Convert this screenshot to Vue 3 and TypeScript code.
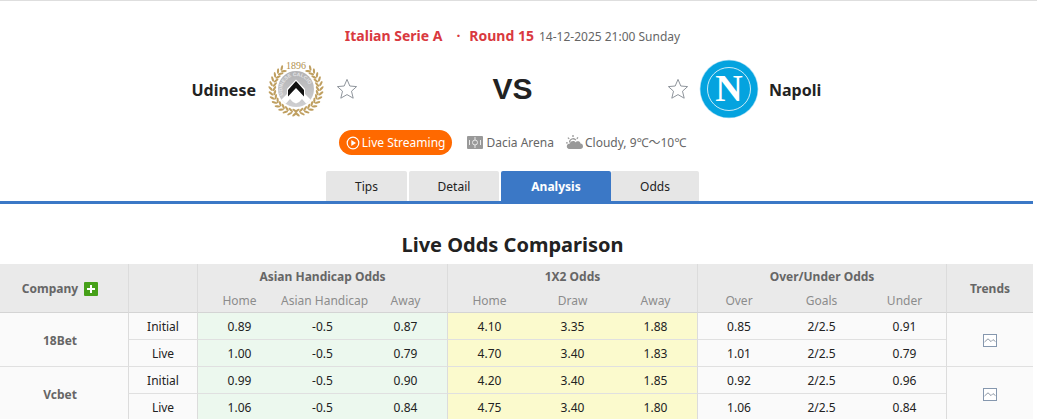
<script setup lang="ts">
interface OddsLine {
  label: string
  values: string[]
}
interface Bookmaker {
  name: string
  lines: OddsLine[]
}
interface Leaf {
  x: number
  y: number
  angle: number
}

const tabs = [
  { label: 'Tips', size: 'w-tips', active: false },
  { label: 'Detail', size: 'w-detail', active: false },
  { label: 'Analysis', size: 'w-analysis', active: true },
  { label: 'Odds', size: 'w-odds', active: false },
]

const groups = [
  { title: 'Asian Handicap Odds', columns: ['Home', 'Asian Handicap', 'Away'] },
  { title: '1X2 Odds', columns: ['Home', 'Draw', 'Away'] },
  { title: 'Over/Under Odds', columns: ['Over', 'Goals', 'Under'] },
]

const bookmakers: Bookmaker[] = [
  {
    name: '18Bet',
    lines: [
      { label: 'Initial', values: ['0.89', '-0.5', '0.87', '4.10', '3.35', '1.88', '0.85', '2/2.5', '0.91'] },
      { label: 'Live', values: ['1.00', '-0.5', '0.79', '4.70', '3.40', '1.83', '1.01', '2/2.5', '0.79'] },
    ],
  },
  {
    name: 'Vcbet',
    lines: [
      { label: 'Initial', values: ['0.99', '-0.5', '0.90', '4.20', '3.40', '1.85', '0.92', '2/2.5', '0.96'] },
      { label: 'Live', values: ['1.06', '-0.5', '0.84', '4.75', '3.40', '1.80', '1.06', '2/2.5', '0.84'] },
    ],
  },
]

const tone = (i: number) => ['asian', 'onextwo', 'total'][Math.floor(i / 3)]

// Laurel wreath: two rings of leaves on each side, leaving room for the year on top
const leaves: Leaf[] = []
for (let i = 0; i < 14; i++) {
  const deg = 34 + i * 11
  for (const side of [1, -1]) {
    for (const [radius, tilt] of [[25.4, 42], [21.6, -30]]) {
      const a = (side * deg * Math.PI) / 180
      leaves.push({
        x: 28 + radius * Math.sin(a),
        y: 28 - radius * Math.cos(a),
        angle: side * (deg + tilt) + 90,
      })
    }
  }
}
</script>

<template>
  <div class="page">
    <header class="match">
      <p class="league">
        <a href="#league">Italian Serie A</a>
        <span class="dot">·</span>
        <a href="#round">Round 15</a>
        <time>14-12-2025 21:00 Sunday</time>
      </p>

      <div class="teams">
        <div class="team home">
          <a href="#udinese">Udinese</a>
          <svg class="crest" width="56" height="56" viewBox="0 0 56 56" aria-label="Udinese crest">
            <defs>
              <linearGradient id="silver" x1="0" y1="0" x2="0" y2="1">
                <stop offset="0" stop-color="#b2b2b4" />
                <stop offset="1" stop-color="#cfcfd1" />
              </linearGradient>
              <path id="ring" d="M15.2 34 A13.8 13.8 0 1 1 40.8 34" />
              <clipPath id="disc"><circle cx="28" cy="28" r="18" /></clipPath>
            </defs>
            <ellipse
              v-for="(leaf, i) in leaves"
              :key="i"
              rx="1.1"
              ry="2.9"
              fill="#bf9f60"
              :transform="`translate(${leaf.x} ${leaf.y}) rotate(${leaf.angle})`"
            />
            <circle cx="28" cy="28" r="18.6" fill="#fff" />
            <circle cx="28" cy="28" r="18" fill="url(#silver)" />
            <text class="motto"><textPath href="#ring">UDINESE CALCIO</textPath></text>
            <g clip-path="url(#disc)">
              <path d="M28 18.5 L19 28 V33 L10 42 L14 47 L22 38 Q24 41 28 42.5 Q32 41 34 38 L42 47 L46 42 L37 33 V28 Z" fill="#fff" />
              <path d="M20 29 L28 20 L36 29 V35.5 L28 27 L20 35.5 Z" fill="#111" />
            </g>
            <text class="year" x="28" y="7.5">1896</text>
          </svg>
          <button class="star" type="button" aria-label="Follow Udinese">
            <svg width="22" height="22" viewBox="0 0 22 22">
              <path d="M11 1.4 L13.8 8 L20.6 8.6 L15.5 13.2 L17.2 20.2 L11 16.6 L4.8 20.2 L6.5 13.2 L1.4 8.6 L8.2 8 Z" />
            </svg>
          </button>
        </div>
        <strong class="versus">VS</strong>
        <div class="team away">
          <button class="star" type="button" aria-label="Follow Napoli">
            <svg width="22" height="22" viewBox="0 0 22 22">
              <path d="M11 1.4 L13.8 8 L20.6 8.6 L15.5 13.2 L17.2 20.2 L11 16.6 L4.8 20.2 L6.5 13.2 L1.4 8.6 L8.2 8 Z" />
            </svg>
          </button>
          <svg class="crest" width="60" height="60" viewBox="0 0 60 60" aria-label="Napoli crest">
            <circle cx="30" cy="30" r="29.3" fill="#a6dcf3" />
            <circle cx="30" cy="30" r="28.6" fill="#04a3df" />
            <circle cx="30" cy="30" r="21.5" fill="none" stroke="#c9ebf8" stroke-width="1" />
            <text class="letter" x="30" y="42">N</text>
          </svg>
          <a href="#napoli">Napoli</a>
        </div>
      </div>

      <div class="info">
        <button class="live" type="button">
          <svg width="14" height="14" viewBox="0 0 14 14">
            <circle cx="7" cy="7" r="5.8" fill="none" stroke="#fff" stroke-width="1.2" />
            <path d="M5.3 4 L10 7 L5.3 10 Z" fill="#fff" />
          </svg>
          Live Streaming
        </button>
        <span class="venue">
          <svg width="16" height="13" viewBox="0 0 16 13">
            <rect width="16" height="13" rx="1" fill="#999" />
            <g fill="none" stroke="#e8e8e8">
              <path d="M2.5 4 V9 M13.5 4 V9 M8 1 V4 M8 9 V12" />
              <circle cx="8" cy="6.5" r="2.5" />
            </g>
          </svg>
          Dacia Arena
        </span>
        <span class="weather">
          <svg width="17" height="16" viewBox="0 0 17 16">
            <g fill="none" stroke="#999" stroke-width="1.3">
              <path d="M3.6 7.5 A3.5 3.5 0 0 1 9.9 5.2 M0 7.8 H1.8 M1.9 2.6 L3.2 3.9 M7 0 V2 M12 2.4 L10.8 3.7" />
            </g>
            <path
              d="M4.4 14 C1.8 14 0.8 12.8 0.8 11.4 C0.8 9.6 2.2 8.4 3.9 8.4 C4.6 5.8 8.3 5.3 9.6 7.5 C10 5.9 14.2 5.5 14.5 8.5 C16 8.7 17 9.7 17 11.2 C17 12.9 15.8 14 14.2 14 Z"
              fill="#999"
            />
          </svg>
          Cloudy, 9℃～10℃
        </span>
      </div>

      <nav class="tabs">
        <a v-for="tab in tabs" :key="tab.label" href="#tab" :class="[tab.size, { active: tab.active }]">{{ tab.label }}</a>
      </nav>
    </header>

    <h1>Live Odds Comparison</h1>

    <table>
      <colgroup>
        <col class="c-company" />
        <col class="c-kind" />
        <template v-for="(g, n) in groups" :key="g.title">
          <col :class="n < 2 ? 'c-first' : 'c-odd'" />
          <col class="c-odd" />
          <col class="c-odd" />
        </template>
        <col class="c-trend" />
      </colgroup>
      <thead>
        <tr>
          <th rowspan="2" class="end">
            <span class="company">
              Company
              <button class="add" type="button" aria-label="Add company">
                <svg width="14" height="14" viewBox="0 0 14 14">
                  <path d="M7 3 V11 M3 7 H11" stroke="#fff" stroke-width="2" />
                </svg>
              </button>
            </span>
          </th>
          <th rowspan="2" class="end line"></th>
          <th v-for="g in groups" :key="g.title" colspan="3" class="line">{{ g.title }}</th>
          <th rowspan="2" class="end line">Trends</th>
        </tr>
        <tr>
          <template v-for="g in groups" :key="g.title">
            <th v-for="(c, i) in g.columns" :key="c" class="sub end" :class="{ line: i === 0 }">{{ c }}</th>
          </template>
        </tr>
      </thead>
      <tbody v-for="b in bookmakers" :key="b.name">
        <tr v-for="(l, n) in b.lines" :key="l.label">
          <th v-if="n === 0" rowspan="2" class="name">{{ b.name }}</th>
          <td class="line">{{ l.label }}</td>
          <td v-for="(v, i) in l.values" :key="i" :class="[tone(i), { line: i % 3 === 0 }]">{{ v }}</td>
          <td v-if="n === 0" rowspan="2" class="line">
            <button class="trend" type="button" aria-label="Odds trend">
              <svg width="14" height="14" viewBox="0 0 14 14">
                <rect x="0.5" y="0.5" width="13" height="12" fill="#fff" stroke="#8597ae" />
                <path d="M1.5 8 L5 4.8 L8 7.6 L10 5.6 L12.5 7.6" fill="none" stroke="#8e98a5" />
              </svg>
            </button>
          </td>
        </tr>
      </tbody>
    </table>
  </div>
</template>

<style>
body {
  margin: 0;
  background: #fff;
}
html {
  overflow: hidden;
}
</style>

<style scoped>
.page {
  padding-right: 4px;
  border-top: 1px solid #dedede;
  font-family: Tahoma, "Noto Sans", "Noto Sans CJK SC", sans-serif;
  font-size: 12px;
  line-height: 16px;
  color: #222;
}
a {
  color: inherit;
  text-decoration: none;
}
button {
  padding: 0;
  border: 0;
  background: none;
  font: inherit;
  cursor: pointer;
}
svg {
  display: block;
  flex: none;
}
.match {
  padding: 25px 8px 0 0;
  border-bottom: 3px solid #3b78c6;
}
.league {
  display: flex;
  justify-content: center;
  align-items: baseline;
  margin: 0;
  line-height: 20px;
  color: #666;
}
.league a,
.dot {
  font-size: 14px;
  font-weight: bold;
  color: #d9393f;
}
.dot {
  margin: 0 9px 0 14px;
}
.league time {
  margin-left: 5px;
}
.teams {
  display: grid;
  grid-template-columns: 1fr 309px 1fr;
  align-items: center;
  margin-top: 11px;
  height: 62px;
}
.team {
  display: flex;
  align-items: center;
  font-size: 16px;
  font-weight: bold;
  line-height: 24px;
}
.team a {
  padding-top: 2px;
}
.home {
  justify-content: flex-end;
  gap: 12px;
}
.away {
  gap: 10px;
}
.star path {
  fill: #fff;
  stroke: #8f959c;
  stroke-width: 1;
}
.versus {
  text-align: center;
  font: bold 30px/34px Arial, "Liberation Sans", sans-serif;
}
.letter {
  font: bold 38px "Liberation Serif", serif;
  fill: #fff;
  text-anchor: middle;
}
.year {
  font: 10px "Liberation Serif", serif;
  fill: #b0904f;
  text-anchor: middle;
}
.motto {
  font: bold 5px "Liberation Sans", sans-serif;
  fill: #e4e4e6;
}
.info {
  display: flex;
  justify-content: center;
  align-items: center;
  margin-top: 10px;
  color: #666;
}
.live {
  display: flex;
  align-items: center;
  gap: 2px;
  height: 25px;
  padding: 0 7px;
  border-radius: 13px;
  background: #ff6900;
  color: #fff;
}
.venue,
.weather {
  display: flex;
  align-items: center;
  gap: 3px;
  margin-left: 15px;
}
.weather {
  gap: 2px;
  margin-left: 12px;
}
.tabs {
  display: flex;
  justify-content: center;
  gap: 2px;
  margin-top: 16px;
}
.tabs a {
  height: 30px;
  border-radius: 2px 2px 0 0;
  background: #e6e6e6;
  line-height: 31px;
  text-align: center;
}
.tabs .active {
  margin-right: -2px;
  background: #3b78c6;
  color: #fff;
  font-weight: bold;
}
.w-tips {
  width: 81px;
}
.w-detail {
  width: 90px;
}
.w-analysis {
  width: 110px;
}
.w-odds {
  width: 88px;
}
h1 {
  margin: 27px 8px 5px 0;
  font-size: 20px;
  line-height: 28px;
  text-align: center;
}
table {
  width: 100%;
  table-layout: fixed;
  border-collapse: separate;
  border-spacing: 0;
  text-align: center;
  white-space: nowrap;
}
.c-company {
  width: 128px;
}
.c-kind {
  width: 69px;
}
.c-first {
  width: 84px;
}
.c-odd {
  width: 83px;
}
.c-trend {
  width: 87px;
}
th,
td {
  box-sizing: border-box;
  height: 27px;
  padding: 2px 0 0;
  border-bottom: 1px solid #e0e0e0;
  background: #fafafa;
}
th {
  color: #666;
}
thead th {
  height: 24px;
  border-bottom: 0;
  background: #eaeaea;
}
thead .end {
  height: 25px;
  border-bottom: 1px solid #d4d4d4;
}
thead .sub {
  color: #8c8c8c;
  font-weight: normal;
}
.line {
  border-left: 1px solid #dcdcdc;
}
.asian {
  background: #ecf8ee;
}
.onextwo {
  background: #fbfacd;
}
.company,
.name {
  padding-right: 8px;
}
.company {
  display: flex;
  justify-content: center;
  align-items: center;
  gap: 6px;
}
.add {
  border-radius: 1px;
  background: #46a019;
}
.trend {
  vertical-align: middle;
}
</style>
